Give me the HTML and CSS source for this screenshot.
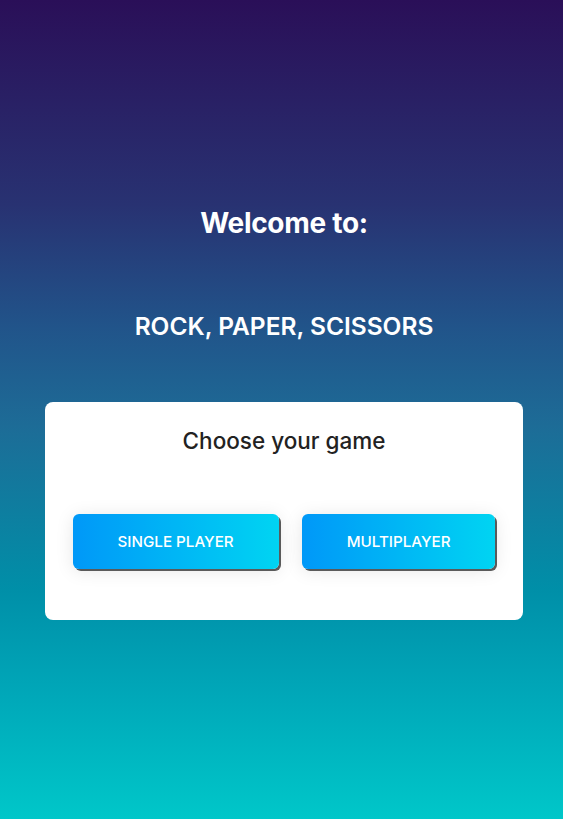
FILE: index.html
```html
<!DOCTYPE html>
<html lang="en">
<head>
<meta charset="utf-8">
<title>Rock, Paper, Scissors</title>
<link rel="stylesheet" href="styles.css">
</head>
<body>
<main class="page">
  <h1 class="welcome">Welcome to:</h1>
  <h2 class="title">ROCK, PAPER, SCISSORS</h2>
  <section class="card">
    <h3 class="card-title">Choose your game</h3>
    <div class="buttons">
      <button class="btn">SINGLE PLAYER</button>
      <button class="btn">MULTIPLAYER</button>
    </div>
  </section>
</main>
</body>
</html>
```
FILE: styles.css
```css
html, body {
  margin: 0;
  padding: 0;
}
body {
  min-height: 100vh;
  font-family: Inter, "Noto Sans", "Liberation Sans", sans-serif;
  background: linear-gradient(to bottom,
    #2a0f58 0%,
    #283272 25%,
    #21548a 40%,
    #1d6c97 52%,
    #008fa8 72%,
    #00a8b9 85%,
    #00c7c9 100%);
}
.page {
  box-sizing: border-box;
  min-height: 100vh;
  display: flex;
  flex-direction: column;
  align-items: center;
  padding: 206px 0 0 5px;
}
.welcome {
  margin: 0;
  color: #fff;
  font-size: 28px;
  font-weight: 700;
  line-height: 34px;
  letter-spacing: -0.3px;
}
.title {
  margin: 72px 0 0;
  color: #fff;
  font-size: 24.5px;
  font-weight: 600;
  line-height: 28px;
}
.card {
  box-sizing: border-box;
  margin-top: 62px;
  width: 478px;
  height: 218px;
  background: #fff;
  border-radius: 8px;
  display: flex;
  flex-direction: column;
  align-items: center;
  padding-top: 26px;
}
.card-title {
  margin: 0;
  color: #222;
  font-size: 22.5px;
  font-weight: 500;
  line-height: 26px;
}
.buttons {
  margin-top: 60px;
  display: flex;
  gap: 23px;
}
.btn {
  height: 55px;
  padding: 0 45px;
  border: none;
  border-radius: 6px;
  background: linear-gradient(to right, #0098f8, #00d4f2);
  color: #fff;
  font-family: inherit;
  font-size: 15.2px;
  font-weight: 500;
  box-shadow: 2px 2px 0 #5a5a5a, 0 2px 18px rgba(0, 0, 0, 0.1);
  cursor: pointer;
}
```
